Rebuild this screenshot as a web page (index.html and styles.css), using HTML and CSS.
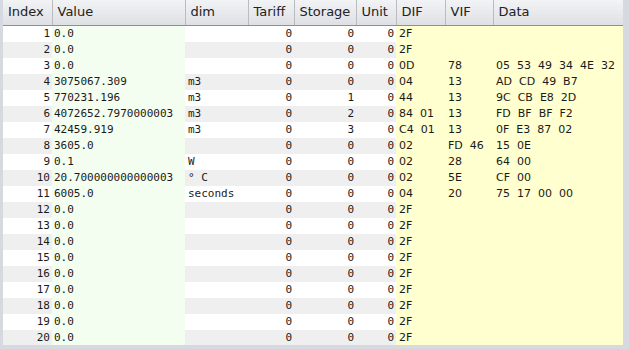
FILE: index.html
```html
<!DOCTYPE html>
<html lang="en">

<head>
    <meta charset="UTF-8">
    <title>Telegram Records</title>
    <link rel="stylesheet" href="styles.css">
</head>

<body>
    <div class="frame">
        <table class="records">
            <colgroup>
                <col class="c-index">
                <col class="c-value">
                <col class="c-dim">
                <col class="c-tariff">
                <col class="c-storage">
                <col class="c-unit">
                <col class="c-dif">
                <col class="c-vif">
                <col class="c-data">
            </colgroup>
            <thead>
                <tr>
                    <th>Index</th>
                    <th>Value</th>
                    <th>dim</th>
                    <th>Tariff</th>
                    <th>Storage</th>
                    <th>Unit</th>
                    <th>DIF</th>
                    <th>VIF</th>
                    <th>Data</th>
                </tr>
            </thead>
            <tbody>
                <tr><td class="num">1</td><td class="val">0.0</td><td class="dim"></td><td class="num">0</td><td class="num">0</td><td class="num">0</td><td class="raw">2F</td><td class="raw"></td><td class="raw"></td></tr>
                <tr><td class="num">2</td><td class="val">0.0</td><td class="dim"></td><td class="num">0</td><td class="num">0</td><td class="num">0</td><td class="raw">2F</td><td class="raw"></td><td class="raw"></td></tr>
                <tr><td class="num">3</td><td class="val">0.0</td><td class="dim"></td><td class="num">0</td><td class="num">0</td><td class="num">0</td><td class="raw">0D</td><td class="raw">78</td><td class="raw">05  53  49  34  4E  32</td></tr>
                <tr><td class="num">4</td><td class="val">3075067.309</td><td class="dim">m3</td><td class="num">0</td><td class="num">0</td><td class="num">0</td><td class="raw">04</td><td class="raw">13</td><td class="raw">AD  CD  49  B7</td></tr>
                <tr><td class="num">5</td><td class="val">770231.196</td><td class="dim">m3</td><td class="num">0</td><td class="num">1</td><td class="num">0</td><td class="raw">44</td><td class="raw">13</td><td class="raw">9C  CB  E8  2D</td></tr>
                <tr><td class="num">6</td><td class="val">4072652.7970000003</td><td class="dim">m3</td><td class="num">0</td><td class="num">2</td><td class="num">0</td><td class="raw">84  01</td><td class="raw">13</td><td class="raw">FD  BF  BF  F2</td></tr>
                <tr><td class="num">7</td><td class="val">42459.919</td><td class="dim">m3</td><td class="num">0</td><td class="num">3</td><td class="num">0</td><td class="raw">C4  01</td><td class="raw">13</td><td class="raw">0F  E3  87  02</td></tr>
                <tr><td class="num">8</td><td class="val">3605.0</td><td class="dim"></td><td class="num">0</td><td class="num">0</td><td class="num">0</td><td class="raw">02</td><td class="raw">FD  46</td><td class="raw">15  0E</td></tr>
                <tr><td class="num">9</td><td class="val">0.1</td><td class="dim">W</td><td class="num">0</td><td class="num">0</td><td class="num">0</td><td class="raw">02</td><td class="raw">28</td><td class="raw">64  00</td></tr>
                <tr><td class="num">10</td><td class="val">20.700000000000003</td><td class="dim">° C</td><td class="num">0</td><td class="num">0</td><td class="num">0</td><td class="raw">02</td><td class="raw">5E</td><td class="raw">CF  00</td></tr>
                <tr><td class="num">11</td><td class="val">6005.0</td><td class="dim">seconds</td><td class="num">0</td><td class="num">0</td><td class="num">0</td><td class="raw">04</td><td class="raw">20</td><td class="raw">75  17  00  00</td></tr>
                <tr><td class="num">12</td><td class="val">0.0</td><td class="dim"></td><td class="num">0</td><td class="num">0</td><td class="num">0</td><td class="raw">2F</td><td class="raw"></td><td class="raw"></td></tr>
                <tr><td class="num">13</td><td class="val">0.0</td><td class="dim"></td><td class="num">0</td><td class="num">0</td><td class="num">0</td><td class="raw">2F</td><td class="raw"></td><td class="raw"></td></tr>
                <tr><td class="num">14</td><td class="val">0.0</td><td class="dim"></td><td class="num">0</td><td class="num">0</td><td class="num">0</td><td class="raw">2F</td><td class="raw"></td><td class="raw"></td></tr>
                <tr><td class="num">15</td><td class="val">0.0</td><td class="dim"></td><td class="num">0</td><td class="num">0</td><td class="num">0</td><td class="raw">2F</td><td class="raw"></td><td class="raw"></td></tr>
                <tr><td class="num">16</td><td class="val">0.0</td><td class="dim"></td><td class="num">0</td><td class="num">0</td><td class="num">0</td><td class="raw">2F</td><td class="raw"></td><td class="raw"></td></tr>
                <tr><td class="num">17</td><td class="val">0.0</td><td class="dim"></td><td class="num">0</td><td class="num">0</td><td class="num">0</td><td class="raw">2F</td><td class="raw"></td><td class="raw"></td></tr>
                <tr><td class="num">18</td><td class="val">0.0</td><td class="dim"></td><td class="num">0</td><td class="num">0</td><td class="num">0</td><td class="raw">2F</td><td class="raw"></td><td class="raw"></td></tr>
                <tr><td class="num">19</td><td class="val">0.0</td><td class="dim"></td><td class="num">0</td><td class="num">0</td><td class="num">0</td><td class="raw">2F</td><td class="raw"></td><td class="raw"></td></tr>
                <tr><td class="num">20</td><td class="val">0.0</td><td class="dim"></td><td class="num">0</td><td class="num">0</td><td class="num">0</td><td class="raw">2F</td><td class="raw"></td><td class="raw"></td></tr>
            </tbody>
        </table>
    </div>
</body>

</html>
```

FILE: styles.css
```css
/* General reset */

* {
    margin: 0;
    padding: 0;
    box-sizing: border-box;
}

html,
body {
    height: 100%;
    overflow: hidden;
}

body {
    background-color: #d6d9df;
    font-family: "DejaVu Sans", sans-serif;
    color: #1a1a1a;
}

.frame {
    width: 623px;
    height: 345px;
    overflow: hidden;
    background-color: #fff;
    border-left: 3px solid #d6d9df;
}

.records {
    width: 620px;
    table-layout: fixed;
    border-collapse: collapse;
    border-spacing: 0;
}

.c-index { width: 49px; }
.c-value { width: 133px; }
.c-dim { width: 63px; }
.c-tariff { width: 46px; }
.c-storage { width: 62px; }
.c-unit { width: 40px; }
.c-dif { width: 49px; }
.c-vif { width: 48px; }
.c-data { width: 130px; }

.records th {
    height: 25px;
    padding: 0 0 1px 5px;
    text-align: left;
    font-weight: normal;
    font-size: 13px;
    color: #222;
    background: linear-gradient(#f2f3f5, #dfe0e4);
    border-right: 1px solid #b9bbc1;
    border-bottom: 1px solid #8c8f96;
    white-space: nowrap;
}

.records th:last-child {
    border-right: 1px solid #a6a8ae;
}

.records td {
    height: 16px;
    padding: 0 3px;
    font-size: 11px;
    line-height: 16px;
    white-space: pre;
    overflow: hidden;
}

.records tbody tr:nth-child(even) td {
    background-color: #efefef;
}

.num,
.val,
.dim {
    font-family: "DejaVu Sans Mono", monospace;
}

.records td.num {
    text-align: right;
    padding-right: 2px;
}

.records td.val {
    padding-left: 2px;
}

.records tbody tr td.val {
    background-color: #f3fef0;
}

.records tbody tr td.raw {
    background-color: #ffffcf;
    font-family: "DejaVu Sans", sans-serif;
}
```
